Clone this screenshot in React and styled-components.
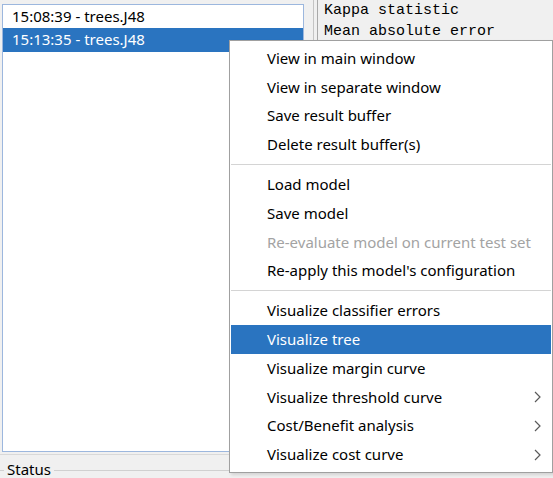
import React from "react";
import styled, { createGlobalStyle } from "styled-components";

const Global = createGlobalStyle`
  html, body { margin: 0; padding: 0; background: #f0f0f0; }
  body { font-family: "Noto Sans", "Open Sans", sans-serif; }
`;

const Page = styled.div`
  position: relative;
  width: 553px;
  height: 478px;
  overflow: hidden;
  background: #f0f0f0;
  display: flex;
  flex-direction: column;
`;

const MainRow = styled.div`
  display: flex;
  height: 452px;
`;

const LeftPane = styled.div`
  padding: 4px 0 0 2px;
  flex: none;
`;

const ResultList = styled.div`
  box-sizing: border-box;
  width: 302px;
  height: 448px;
  border: 1px solid #9cb7de;
  background: #fff;
`;

const ListRow = styled.div`
  box-sizing: border-box;
  height: ${(p) => p.$h}px;
  display: flex;
  align-items: center;
  padding: 0 0 2px 9px;
  font-size: 15px;
  color: ${(p) => (p.$selected ? "#fff" : "#000")};
  background: ${(p) => (p.$selected ? "#2a74c0" : "transparent")};
`;

const Divider = styled.div`
  flex: none;
  width: 14px;
  display: flex;
  justify-content: flex-end;
  gap: 3px;
`;

const DividerLine = styled.div`
  width: 1px;
  height: 100%;
  background: ${(p) => p.$c};
`;

const OutputArea = styled.div`
  flex: 1;
  padding-left: 6px;
  font-family: "Liberation Mono", "Courier New", monospace;
  font-size: 15px;
  line-height: 21px;
  color: #000;
  white-space: pre;
  overflow: hidden;
`;

const BottomRule = styled.div`
  height: 1px;
  margin-top: 2px;
  background: #d9d9d9;
`;

const StatusBox = styled.div`
  display: flex;
  align-items: center;
  margin-top: 5px;
  gap: 3px;
`;

const StatusLine = styled.div`
  height: 1px;
  background: #d0d0d0;
  width: ${(p) => (p.$w ? p.$w + "px" : "auto")};
  flex: ${(p) => (p.$w ? "none" : "1")};
  margin-top: 3px;
`;

const StatusLabel = styled.span`
  font-size: 15px;
  color: #000;
  line-height: 18px;
`;

const Menu = styled.div`
  position: absolute;
  left: 229px;
  top: 40px;
  width: 324px;
  box-sizing: border-box;
  background: #fff;
  border: 1px solid #a0a0a0;
  padding: 3px 1px 3px 1px;
  box-shadow: 2px 2px 3px rgba(0, 0, 0, 0.12);
`;

const MenuItem = styled.div`
  position: relative;
  box-sizing: border-box;
  height: 28.8px;
  display: flex;
  align-items: center;
  padding: 0 0 1px 36px;
  font-size: 15px;
  color: ${(p) => (p.$disabled ? "#a3a3a3" : p.$active ? "#fff" : "#000")};
  background: ${(p) => (p.$active ? "#2a74c0" : "transparent")};
`;

const Separator = styled.div`
  height: 11px;
  display: flex;
  align-items: center;
  &::after {
    content: "";
    flex: 1;
    height: 1px;
    background: #d4d4d4;
  }
`;

const Chevron = styled.svg`
  position: absolute;
  right: 10px;
  top: 50%;
  margin-top: -6px;
`;

const Arrow = () => (
  <Chevron width="7" height="12" viewBox="0 0 7 12">
    <path d="M1 1 L6 6 L1 11" fill="none" stroke="#5a5a5a" strokeWidth="1.2" />
  </Chevron>
);

const groups = [
  [
    { t: "View in main window" },
    { t: "View in separate window" },
    { t: "Save result buffer" },
    { t: "Delete result buffer(s)" },
  ],
  [
    { t: "Load model" },
    { t: "Save model" },
    { t: "Re-evaluate model on current test set", disabled: true },
    { t: "Re-apply this model's configuration" },
  ],
  [
    { t: "Visualize classifier errors" },
    { t: "Visualize tree", active: true },
    { t: "Visualize margin curve" },
    { t: "Visualize threshold curve", sub: true },
    { t: "Cost/Benefit analysis", sub: true },
    { t: "Visualize cost curve", sub: true },
  ],
];

export default function App() {
  return (
    <>
      <Global />
      <Page>
        <MainRow>
          <LeftPane>
            <ResultList>
              <ListRow $h={23}>15:08:39 - trees.J48</ListRow>
              <ListRow $h={24} $selected>
                15:13:35 - trees.J48
              </ListRow>
            </ResultList>
          </LeftPane>
          <Divider>
            <DividerLine $c="#c4c4c4" />
            <DividerLine $c="#a9a9a9" />
          </Divider>
          <OutputArea>{"Kappa statistic\nMean absolute error"}</OutputArea>
        </MainRow>
        <BottomRule />
        <StatusBox>
          <StatusLine $w={4} />
          <StatusLabel>Status</StatusLabel>
          <StatusLine />
        </StatusBox>
        <Menu>
          {groups.map((g, gi) => (
            <React.Fragment key={gi}>
              {gi > 0 && <Separator />}
              {g.map((it) => (
                <MenuItem key={it.t} $disabled={it.disabled} $active={it.active}>
                  {it.t}
                  {it.sub && <Arrow />}
                </MenuItem>
              ))}
            </React.Fragment>
          ))}
        </Menu>
      </Page>
    </>
  );
}
